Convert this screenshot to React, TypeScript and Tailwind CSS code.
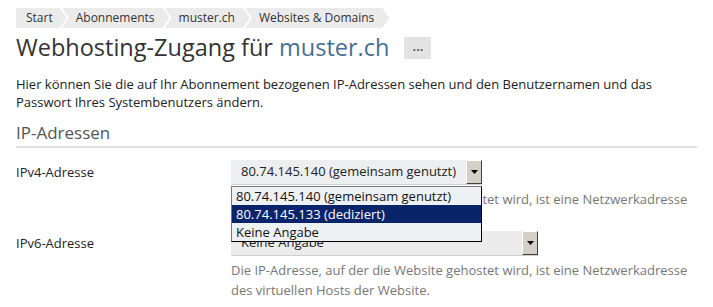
import React from 'react';

const crumbs = ['Start', 'Abonnements', 'muster.ch', 'Websites & Domains'];

const SelectArrow: React.FC = () => (
  <span className="flex h-full w-[16px] shrink-0 items-center justify-center border border-t-white border-l-white border-r-[#404040] border-b-[#404040] bg-[#d4d0c8]">
    <svg width="7" height="4" viewBox="0 0 7 4">
      <polygon points="0,0 7,0 3.5,4" fill="#000" />
    </svg>
  </span>
);

const App: React.FC = () => {
  return (
    <div className="px-4 pt-2 text-[13px] text-[#222] font-['Open_Sans',sans-serif] bg-white min-h-[307px]">
      {/* Breadcrumbs */}
      <ul className="flex h-5 text-[12px]">
        {crumbs.map((c, i) => (
          <li
            key={c}
            className={
              i === 0
                ? 'flex items-center bg-[#ebebeb] pl-[10px] pr-[14px] text-[#333] leading-5 [clip-path:polygon(0_0,calc(100%_-_7px)_0,100%_50%,calc(100%_-_7px)_100%,0_100%)]'
                : 'ml-[-5px] flex items-center bg-[#ebebeb] pl-[14px] pr-[15px] text-[#333] leading-5 [clip-path:polygon(0_0,calc(100%_-_7px)_0,100%_50%,calc(100%_-_7px)_100%,0_100%,7px_50%)]'
            }
          >
            {c}
          </li>
        ))}
      </ul>

      {/* Title */}
      <div className="mt-[3px] flex items-center gap-[15px]">
        <h1 className="text-[23.5px] leading-8 text-[#333]">
          Webhosting-Zugang für <span className="text-[#45708f]">muster.ch</span>
        </h1>
        <span className="mt-[2px] flex h-[22px] w-[27px] items-center justify-center bg-[#e3e3e3] pb-[3px] text-[13px] font-semibold leading-none text-[#444]">
          ...
        </span>
      </div>

      <p className="mt-3 leading-[18px]">
        Hier können Sie die auf Ihr Abonnement bezogenen IP-Adressen sehen und den Benutzernamen und das Passwort Ihres Systembenutzers ändern.
      </p>

      {/* Section */}
      <h2 className="mt-[10px] border-b-2 border-[#e0e0e0] pb-[1px] text-[17px] leading-6 text-[#555]">IP-Adressen</h2>

      <div className="mt-3 flex flex-col gap-[2px]">
        {/* IPv4 */}
        <div className="flex">
          <div className="w-[215px] shrink-0 leading-[25px]">IPv4-Adresse</div>
          <div className="flex flex-col">
            <div className="relative z-10 w-[251px]">
              <div className="flex h-[25px] items-center border-b border-[#d0d0d0] bg-[#eceef0]">
                <span className="flex-1 pl-[10px]">80.74.145.140 (gemeinsam genutzt)</span>
                <SelectArrow />
              </div>
              <ul className="absolute left-0 top-[26px] w-[251px] border border-t-[#7a7a7a] border-l-[#7a7a7a] border-r-black border-b-black bg-[#eef1f4] text-[#111]">
                <li className="h-[18px] pl-1 leading-[18px]">80.74.145.140 (gemeinsam genutzt)</li>
                <li className="h-[18px] bg-[#0a246a] pl-1 leading-[18px] text-white">80.74.145.133 (dediziert)</li>
                <li className="h-[18px] pl-1 leading-[18px]">Keine Angabe</li>
              </ul>
            </div>
            <p className="mt-1 leading-5 text-[#777]">
              Die IP-Adresse, auf der die Website gehostet wird, ist eine Netzwerkadresse des virtuellen Hosts der Website.
            </p>
          </div>
        </div>

        {/* IPv6 */}
        <div className="flex">
          <div className="w-[215px] shrink-0 leading-[25px]">IPv6-Adresse</div>
          <div className="flex flex-col">
            <div className="flex h-[25px] w-[307px] items-center border-b border-[#d0d0d0] bg-[#ececec]">
              <span className="flex-1 pl-[10px]">Keine Angabe</span>
              <SelectArrow />
            </div>
            <p className="mt-1 leading-5 text-[#777]">
              Die IP-Adresse, auf der die Website gehostet wird, ist eine Netzwerkadresse des virtuellen Hosts der Website.
            </p>
          </div>
        </div>
      </div>
    </div>
  );
};

export default App;
